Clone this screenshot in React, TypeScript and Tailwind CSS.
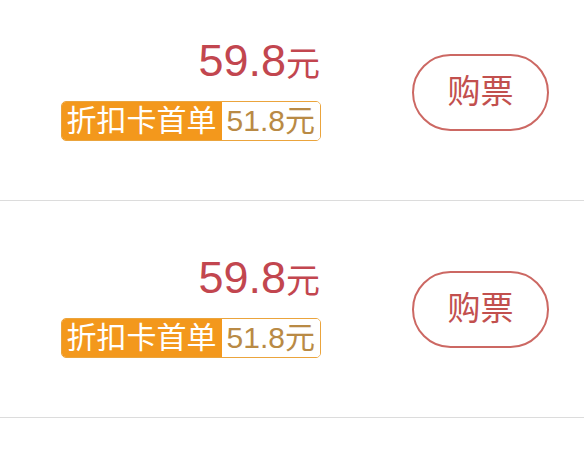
export default function App() {
  const rows = [0, 1];
  return (
    <div
      className="w-[584px] h-[460px] overflow-hidden bg-white"
      style={{ fontFamily: '"Liberation Sans", "Noto Sans CJK SC", sans-serif' }}
    >
      <div className="-mt-[16px]">
        {rows.map((r) => (
          <div
            key={r}
            className="h-[217px] flex items-center justify-end border-b border-[#dcdcdc] pr-[35px]"
          >
            <div className="flex flex-col items-end -mt-[5px]">
              <div className="flex items-baseline text-[#c2464f] leading-none pr-[1px]">
                <span className="text-[45px]">59.8</span>
                <span className="text-[34px]">元</span>
              </div>
              <div className="mt-[18px] flex h-[40px] rounded-[5px] border-[1.5px] border-[#eba43c] overflow-hidden">
                <div className="flex items-center bg-[#f3981c] px-[5px] text-[30px] text-white leading-none">
                  折扣卡首单
                </div>
                <div className="flex items-center bg-white px-[5px] text-[30px] text-[#b98a45] leading-none">
                  51.8元
                </div>
              </div>
            </div>
            <button className="ml-[91px] w-[137px] h-[77px] rounded-full border-[2.5px] border-[#cc6863] text-[33px] text-[#c2504e] flex items-center justify-center">
              购票
            </button>
          </div>
        ))}
      </div>
    </div>
  );
}
